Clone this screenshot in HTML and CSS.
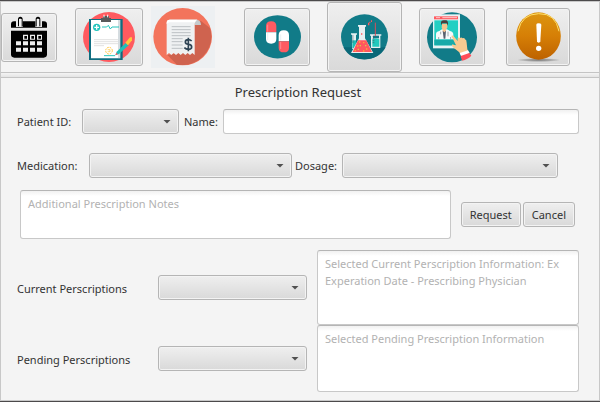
FILE: index.html
```html
<!DOCTYPE html>
<html lang="en">
<head>
<meta charset="utf-8">
<title>Prescription Request</title>
<link rel="stylesheet" href="styles.css">
</head>
<body>
<div class="window">
  <nav class="toolbar" aria-label="Sections">
    <button class="tool tool-calendar" type="button" aria-label="Calendar">
      <svg width="36" height="42" viewBox="33 49 108 126">
        <path d="M33 84V74Q33 65 42 65H48V82H68V65H106V82H126V65H132Q141 65 141 74V84Z"/>
        <path d="M54 80V59Q54 51 61 51T68 59V80H63V57H58V80ZM107 80V59Q107 51 114 51T121 59V80H116V57H111V80Z"/>
        <path d="M57 58h8v22h-8zM110 58h8v22h-8z" fill="#f2f2f2"/>
        <path d="M33 93H141V164Q141 174 131 174H43Q33 174 33 164Z"/>
        <path d="M69 105h15v15h-15zM90 105h15v15h-15zM111 105h15v15h-15zM48 125h15v12h-15zM69 125h15v12h-15zM90 125h15v12h-15zM111 125h15v12h-15zM48 144h15v12h-15zM69 144h15v12h-15zM90 144h15v12h-15zM111 144h15v12h-15z" fill="#eee"/>
        <path d="M73 109h8v8h-8zM94 109h8v8h-8zM115 109h8v8h-8z"/>
      </svg>
    </button>
    <button class="tool tool-wide" type="button" aria-label="Medical records">
      <svg width="52" height="50" viewBox="249 36 156 150">
        <ellipse cx="327" cy="111" rx="78" ry="75" fill="#ff5a5f"/>
        <path d="M267 57H368V180H267Z" fill="#0f6d80"/>
        <path d="M273 60H354V175H273Z" fill="#fff"/>
        <path d="M354 60H361V175H354Z" fill="#d5dce0"/>
        <path d="M303 66V54H309V48H327V54H333V66Z" fill="#58595b"/>
        <path d="M312 52V44M323 52V44" stroke="#fff" stroke-width="3"/>
        <circle cx="290" cy="82" r="11" fill="#25c4bc"/>
        <path d="M290 75V89M283 82H297" stroke="#fff" stroke-width="4"/>
        <path d="M306 81H320L325 76L331 87L336 81H357" fill="none" stroke="#25c4bc" stroke-width="3"/>
        <path d="M282 119H354M282 125H354M282 131H354M282 137H312" stroke="#d2d2d2" stroke-width="2"/>
        <circle cx="327" cy="152" r="10" fill="none" stroke="#ffc63c" stroke-width="3" stroke-dasharray="5 3"/>
        <path d="M323 149H330V155H323" fill="none" stroke="#ffc63c" stroke-width="2"/>
        <path d="M312 167H345" stroke="#25c4bc" stroke-width="3"/>
        <path d="M346 166L350 155L378 128L386 136L357 162Z" fill="#20bfb8"/>
        <path d="M346 166L349 158L354 163Z" fill="#ff5a5f"/>
        <path d="M376 128L390 112H396V121L384 136Z" fill="#ffc63c"/>
      </svg>
    </button>
    <button class="tool-flat" type="button" aria-label="Billing">
      <svg width="64" height="62" viewBox="19 18 192 186">
        <path d="M19 18H211V204H19Z" fill="#edf0f2"/>
        <ellipse cx="114" cy="110" rx="88" ry="86" fill="#f3745c"/>
        <path d="M168 62L196 84A88 86 0 0 1 97 194L68 165L150 150V75Z" fill="#cf634f"/>
        <path d="M75 59H158Q169 62 169 75H150V68H75Z" fill="#c6cacc"/>
        <path d="M75 59H158Q150 63 150 75V165L143 159L136 165L129 159L122 165L115 159L108 165L101 159L94 165L87 159L80 165L73 159L66 165V68Q66 59 75 59Z" fill="#eff1f2"/>
        <path d="M66 72V68Q66 59 75 59H158Q153 61 151 67H75Q70 67 66 72Z" fill="#fff"/>
        <path d="M81 80H138M81 89H138M81 98H138M81 107H138M81 116H114M81 125H114M81 135H114M81 145H114" stroke="#bcc1c4" stroke-width="3"/>
        <path d="M141 123Q137 119 131 119Q122 119 122 126Q122 132 131 133Q141 134 141 141Q141 148 131 148Q124 148 119 143M131 113V154" fill="none" stroke="#2f4454" stroke-width="5"/>
      </svg>
    </button>
    <button class="tool" type="button" aria-label="Prescriptions">
      <svg width="47" height="44" viewBox="57 47 141 132">
        <ellipse cx="127.500" cy="112.500" rx="70.500" ry="65" fill="#117b88"/>
        <path d="M93 99V80Q93 66 108.500 66T124 80V99Z" fill="#ff5b62"/>
        <path d="M93 99H124V119Q124 133 108.500 133T93 119Z" fill="#fff"/>
        <path d="M131 126V107Q131 93 146.500 93T162 107V126Z" fill="#fff"/>
        <path d="M131 126H162V145Q162 159 146.500 159T131 145Z" fill="#ff5b62"/>
        <path d="M98 76V97M137 128V149" stroke="#ff8c91" stroke-width="3"/>
        <path d="M98 101V122M137 105V124" stroke="#dfeaec" stroke-width="2"/>
      </svg>
    </button>
    <button class="tool tool-current" type="button" aria-label="Lab tests" aria-current="page">
      <svg width="47" height="46" viewBox="63 44 141 138">
        <ellipse cx="133.500" cy="112.500" rx="70.500" ry="68" fill="#117b88"/>
        <path d="M70 144H197Q177 180 133 180T70 144Z" fill="#096878"/>
        <path d="M93 102H111V106H108V148H96V106H93Z" fill="#e4eff1"/>
        <path d="M97 123H108V146H97Z" fill="#1dbdb5"/>
        <path d="M96 110H101M96 116H101M96 122H101M96 128H101" stroke="#405b66" stroke-width="2"/>
        <path d="M114 77H138V82H135V117L160 161H93L117 117V82H114Z" fill="#e8eff1"/>
        <path d="M114 123H139L156 158H98Z" fill="#ff585f"/>
        <path d="M117 126h4v4h-4zM129 128h4v4h-4zM111 138h4v4h-4zM138 147h4v4h-4zM104 152h4v4h-4zM129 153h4v4h-4z" fill="#ffad35"/>
        <path d="M119 137h4v4h-4zM135 137h4v4h-4zM113 148h4v4h-4z" fill="#d5cf45"/>
        <path d="M123 102h4v4h-4z" fill="#ff585f"/>
        <path d="M150 105H184V109H181V146H153V109H150Z" fill="#e4eff1"/>
        <path d="M159 109H177V117H159Z" fill="#117b88"/>
        <path d="M157 120L167 117L178 120V142H157Z" fill="#20c9bd"/>
        <path d="M158 112H163M158 118H163M158 124H163M158 130H163" stroke="#405b66" stroke-width="2"/>
        <path d="M166 70V110" stroke="#d44f5b" stroke-width="3"/>
        <path d="M144 70h4v8h-4zM148 67h3v4h-3zM153 63h3v5h-3z" fill="#ff585f"/>
      </svg>
    </button>
    <button class="tool" type="button" aria-label="Online doctor">
      <svg width="50" height="51" viewBox="51 35 150 153">
        <ellipse cx="126" cy="111" rx="75" ry="75" fill="#117b88"/>
        <path d="M69 42H150V144H69Z" fill="#e9f2f4"/>
        <path d="M72 48H144V57H72Z" fill="#ff5a5f"/>
        <path d="M78 52H90M97 52H141" stroke="#fff" stroke-width="2"/>
        <path d="M73 60H144V135H73Z" fill="#23cfc3"/>
        <path d="M73 118H144V135H73Z" fill="#18aaa9"/>
        <path d="M78 117V101Q78 94 88 92L96 87H111L120 92Q130 94 130 103V117Z" fill="#f7fafb"/>
        <path d="M96 70H112V82L108 88V93L103 99L98 93V88L95 82Z" fill="#f8c48e"/>
        <path d="M93 75V66Q93 60 101 60H109Q115 61 114 76L110 69H97Z" fill="#4d3e3d"/>
        <path d="M98 91L103 96L108 91L106 115H101Z" fill="#58606e"/>
        <path d="M92 94V102M114 94V108M86 110V117M122 110V117" stroke="#71808a" stroke-width="2"/>
        <path d="M124 107Q128 103 133 110L143 122V114Q145 110 150 113Q154 109 158 114Q163 111 165 117Q170 118 170 127L172 147L178 158L157 170L147 155L129 141Q123 136 127 132L139 136Z" fill="#f8ca91"/>
        <path d="M149 158L174 150L179 158L155 172Z" fill="#fff"/>
        <path d="M152 167L178 158L184 166Q174 177 156 181Z" fill="#ff4e59"/>
      </svg>
    </button>
    <button class="tool tool-alert" type="button" aria-label="Alerts">
      <svg width="45" height="50" viewBox="315 36 135 150">
        <defs>
          <linearGradient id="amber" x1="0" y1="0" x2="0" y2="1">
            <stop offset="0" stop-color="#dc9510"/>
            <stop offset="0.500" stop-color="#d67f06"/>
            <stop offset="1" stop-color="#bd6200"/>
          </linearGradient>
          <radialGradient id="shade">
            <stop offset="0" stop-color="#777"/>
            <stop offset="0.600" stop-color="#aaa"/>
            <stop offset="1" stop-color="#aaa" stop-opacity="0"/>
          </radialGradient>
        </defs>
        <ellipse cx="383" cy="180" rx="66" ry="6" fill="url(#shade)"/>
        <ellipse cx="382.500" cy="108" rx="67" ry="71" fill="url(#amber)"/>
        <path d="M321 94Q332 42 383 41T444 94" fill="none" stroke="#ffe06a" stroke-width="3"/>
        <path d="M376 74Q376 70 383 70T391 74L388 124Q387 128 383 128T378 124Z" fill="#fff"/>
        <circle cx="383" cy="145" r="8" fill="#fff"/>
      </svg>
    </button>
  </nav>

  <div class="divider"></div>

  <form class="form">
    <h1 class="title">Prescription Request</h1>

    <div class="row row-patient">
      <label for="patient">Patient ID:</label>
      <span class="combo"><select id="patient"><option></option></select></span>
      <label for="name">Name:</label>
      <input class="field" id="name" type="text">
    </div>

    <div class="row row-medication">
      <label for="medication">Medication:</label>
      <span class="combo"><select id="medication"><option></option></select></span>
      <label for="dosage">Dosage:</label>
      <span class="combo"><select id="dosage"><option></option></select></span>
    </div>

    <div class="row row-notes">
      <textarea class="field" aria-label="Additional Prescription Notes" placeholder="Additional Prescription Notes"></textarea>
      <div class="actions">
        <button class="push" type="button">Request</button>
        <button class="push" type="button">Cancel</button>
      </div>
    </div>

    <div class="lists">
      <label for="current">Current Perscriptions</label>
      <span class="combo"><select id="current"><option></option></select></span>
      <textarea class="field info info-current" aria-label="Current prescription information" placeholder="Selected Current Perscription Information: Ex&#10;Experation Date - Prescribing Physician"></textarea>
      <label for="pending">Pending Perscriptions</label>
      <span class="combo"><select id="pending"><option></option></select></span>
      <textarea class="field info info-pending" aria-label="Pending prescription information" placeholder="Selected Pending Prescription Information"></textarea>
    </div>
  </form>
</div>
</body>
</html>
```
FILE: styles.css
```css
* {
  box-sizing: border-box;
}

body {
  margin: 0;
  border-top: 1px solid #4c4a4b;
  border-bottom: 1px solid #4c4a4b;
  background: #f4f4f4;
  color: #333;
  font: 11px/17px "Noto Sans", "Open Sans", sans-serif;
}

.window {
  border: 1px solid #c8c8c8;
}

button,
input,
select,
textarea {
  margin: 0;
  color: inherit;
  font: inherit;
}

svg {
  display: block;
}

/* Toolbar */

.toolbar {
  display: grid;
  grid-template-columns: 74fr 76fr 93fr 83fr 92fr 87fr 93fr;
  align-items: center;
  justify-items: start;
}

.tool,
.push,
select {
  border: 1px solid #b5b5b5;
  border-radius: 3px;
  background: linear-gradient(#efefef, #d9d9d9);
  box-shadow: inset 0 0 0 1px #f3f3f3;
}

.tool {
  display: grid;
  place-items: center;
  width: 66px;
  height: 58px;
  padding: 0;
}

.tool-calendar {
  width: 56px;
  height: 49px;
}

.tool-wide {
  width: 68px;
}

.tool-current {
  width: 75px;
  height: 70px;
}

.tool-alert {
  width: 64px;
}

.tool-flat {
  padding: 0;
  border: 0;
  background: none;
}

.divider {
  height: 6px;
  border: solid #c4c4c4;
  border-width: 1px 0;
  background: linear-gradient(#f4f4f4, #e4e4e4);
}

/* Form */

.form {
  padding: 0 20px 8px 16px;
}

.title {
  margin: 0 0 3px;
  font-size: 13px;
  font-weight: 400;
  line-height: 28px;
  text-align: center;
}

.row {
  display: grid;
  align-items: center;
}

.row-patient {
  grid-template-columns: 65px 97px 39px 1fr;
  margin-bottom: 19px;
}

.row-patient label + .field,
.row-patient .combo + label {
  margin-left: 5px;
}

.row-medication {
  grid-template-columns: 72px 203fr 50px 216fr;
  margin-bottom: 12px;
  padding-right: 21px;
}

.row-medication .combo + label {
  margin-left: 3px;
}

.row-notes {
  grid-template-columns: 1fr auto;
  gap: 10px;
  margin-bottom: 11px;
  padding: 0 4px 0 3px;
}

.row-notes .field {
  height: 49px;
}

.actions {
  display: flex;
  gap: 2px;
}

.push {
  height: 25px;
  padding: 0 8px;
}

.field {
  display: block;
  width: 100%;
  min-width: 0;
  padding: 4px 7px;
  border: 1px solid #c8c8c8;
  border-top-color: #b5b5b5;
  border-radius: 3px;
  background: linear-gradient(#f1f1f1, #fff 5px);
  resize: none;
}

input.field {
  width: auto;
  height: 25px;
}

textarea {
  overflow: hidden;
}

.field::placeholder {
  color: #b2b2b2;
  opacity: 1;
}

.combo {
  display: grid;
  align-items: center;
}

.combo > select,
.combo::after {
  grid-area: 1 / 1;
}

.combo::after {
  content: "";
  justify-self: end;
  width: 8px;
  height: 4px;
  margin-right: 8px;
  background: #505050;
  clip-path: polygon(0 0, 100% 0, 50% 100%);
  pointer-events: none;
}

select {
  width: 100%;
  height: 25px;
  padding: 0 20px 0 7px;
  appearance: none;
}

.lists {
  display: grid;
  grid-template-columns: 141px 149px 1fr;
  align-items: center;
}

.lists label {
  padding-top: 2px;
}

.info {
  width: auto;
  margin-left: 10px;
}

.info-current {
  height: 75px;
}

.info-pending {
  height: 67px;
}
```
